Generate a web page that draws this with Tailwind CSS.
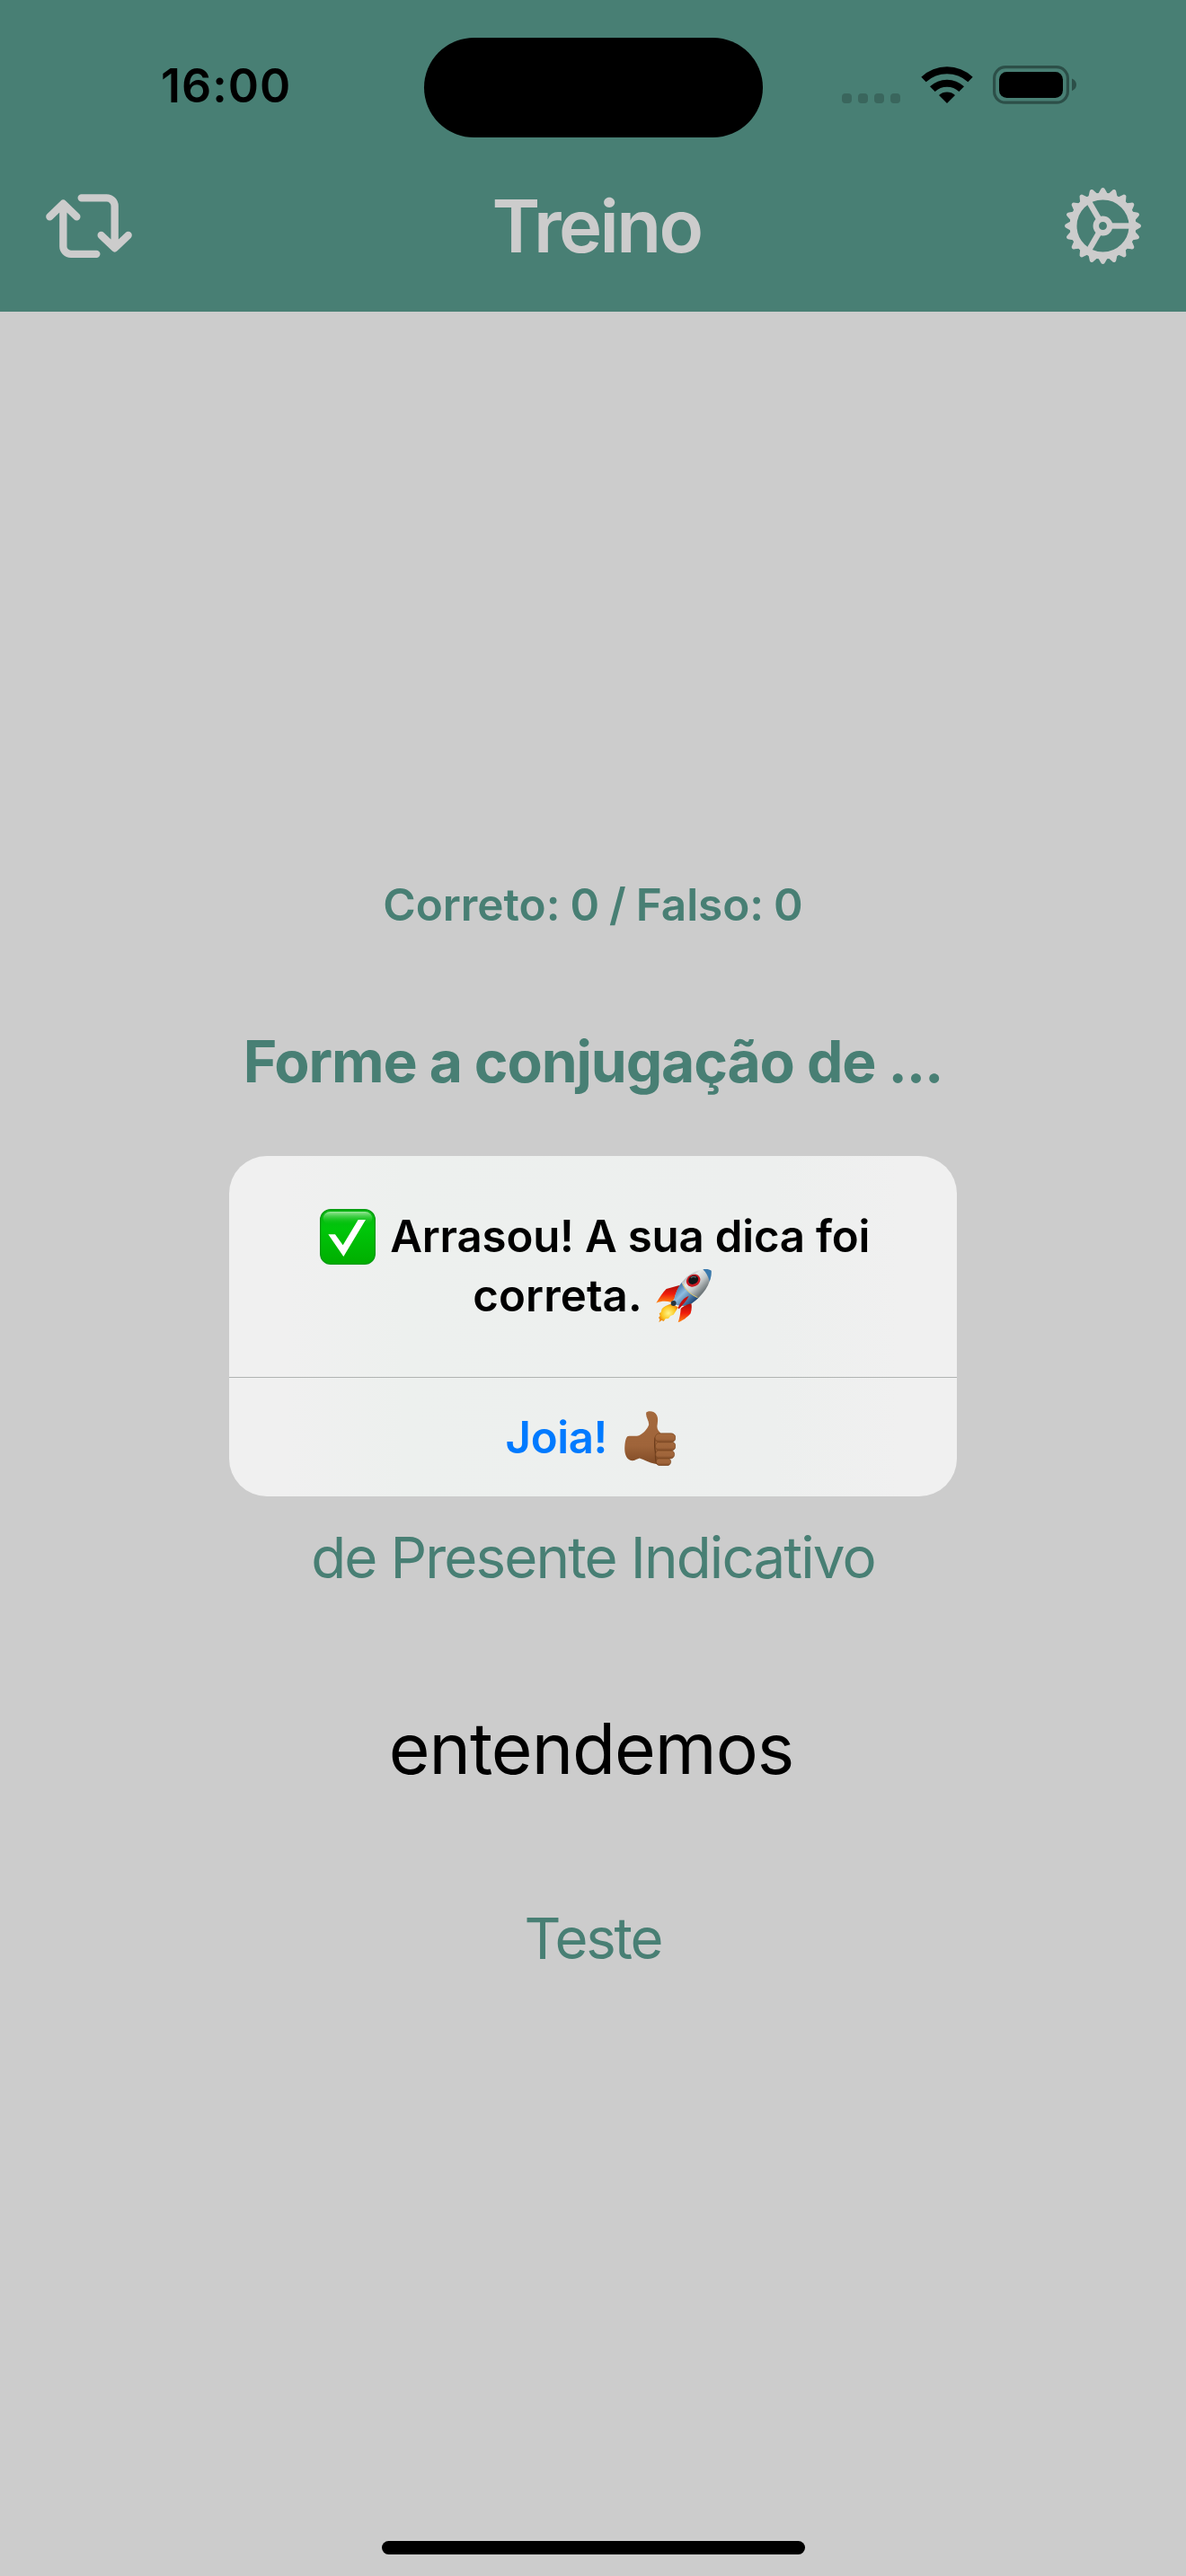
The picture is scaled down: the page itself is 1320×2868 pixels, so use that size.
<!DOCTYPE html>
<html lang="pt">
<head>
<meta charset="utf-8">
<meta name="viewport" content="width=device-width">
<title>Treino</title>
<script src="https://cdn.jsdelivr.net/npm/@tailwindcss/browser@4"></script>
</head>
<body class="relative flex h-[2868px] w-[1320px] flex-col overflow-hidden bg-[#cccccc] font-['Inter',sans-serif] text-[#487f74]">

<header class="h-[347px] shrink-0 bg-[#487f74]">
  <!-- status bar -->
  <div class="flex h-[156px] items-start text-black">
    <div class="ml-[179px] mt-[46px] h-[100px] w-[292.5px] text-[52px] leading-[100px] font-semibold tracking-[0.97px]">16:00</div>
    <div class="mt-[41.5px] h-[111px] w-[377px] rounded-full bg-black"></div>
    <div class="ml-[88.5px] mt-[104px] flex gap-[7px]">
      <span class="size-[11px] rounded-[4px] bg-[#3a665d]"></span>
      <span class="size-[11px] rounded-[4px] bg-[#3a665d]"></span>
      <span class="size-[11px] rounded-[4px] bg-[#3a665d]"></span>
      <span class="size-[11px] rounded-[4px] bg-[#3a665d]"></span>
    </div>
    <svg class="ml-[22.500px] mt-[73px] h-[42px] w-[58px]" viewBox="0 0 174 126">
      <path d="M1 38 A126 126 0 0 1 173 38 L157 55 A103 103 0 0 0 17 55 Z"/>
      <path d="M30 70 A82 82 0 0 1 144 70 L127 87 A59 59 0 0 0 47 87 Z"/>
      <path d="M60 99 A40 40 0 0 1 114 99 L87 126 Z"/>
    </svg>
    <svg class="ml-[22.500px] mt-[73px] h-[43px] w-[94px]" viewBox="0 0 94 43">
      <rect x="1.6" y="1.6" width="81.800" height="39.6" rx="12.5" fill="none" stroke="#2c4f48" stroke-width="3.2"/>
      <rect x="7" y="7" width="71" height="29" rx="8.5"/>
      <path d="M88 14.5 C91.500 16 93 18.500 93 21.300 C93 24.200 91.500 26.700 88 28.200 Z" fill="#2c4f48"/>
    </svg>
  </div>
  <!-- navigation bar -->
  <div class="flex h-[191px] items-center text-[#cccccc]">
    <svg class="ml-[50px] h-[74px] w-[98px] shrink-0" viewBox="60 75 294 222" fill="none" stroke="currentColor" stroke-width="25" stroke-linecap="round" stroke-linejoin="round">
      <path d="M76 154 L121 110 L166 154 M121 114 V251 A26 26 0 0 0 147 278.500 H232"/>
      <path d="M182 91 H266 A27 27 0 0 1 293 118 V255 M248 216 L293 259 L338 216"/>
    </svg>
    <h1 class="flex-1 pr-[5px] text-center text-[81.5px] leading-[100px] font-semibold tracking-[-2.63px]">Treino</h1>
    <svg class="mr-[50px] size-[85px] shrink-0" viewBox="-42.500 -42.500 85 85">
      <g id="teeth" fill="currentColor"></g>
      <circle r="33" fill="none" stroke="currentColor" stroke-width="8"/>
      <circle r="7.700" fill="none" stroke="currentColor" stroke-width="6.500"/>
      <g stroke="currentColor" stroke-width="6.400">
        <path d="M9 0 H31"/>
        <path d="M9 0 H31" transform="rotate(120)"/>
        <path d="M9 0 H31" transform="rotate(240)"/>
      </g>
    </svg>
  </div>
</header>

<main class="flex flex-1 flex-col items-center pt-[610px] leading-[100px] whitespace-nowrap">
  <p class="text-[49.5px] font-semibold tracking-[-0.05px] [word-spacing:-1.400px]">Correto: 0 / Falso: 0</p>
  <h2 class="mt-[74.500px] text-[64.2px] font-bold tracking-[-1.13px]">Forme a conjugação de ...</h2>
  <p class="mt-[452px] text-[63.7px] tracking-[-1.9px]">de Presente Indicativo</p>
  <p class="mt-[113px] pr-[4px] text-[78.6px] tracking-[-1.05px] text-black">entendemos</p>
  <button class="mt-[111.500px] text-[63.5px] tracking-[-2.18px]">Teste</button>
</main>

<!-- home indicator -->
<div class="mx-auto mb-[24px] h-[15px] w-[471px] shrink-0 rounded-full bg-black"></div>

<!-- alert -->
<div role="dialog" class="absolute left-[255px] top-[1287px] flex h-[379px] w-[810px] flex-col overflow-hidden rounded-[42px] bg-[linear-gradient(90deg,#f0f0f0_0%,#f0f0f0_8%,#edf0ee_24%,#edefee_75%,#f0f0f0_92%,#f0f0f0_100%)] text-[49.2px] font-semibold whitespace-nowrap text-black">
  <div class="h-[246px] pt-[57px]">
    <div class="flex h-[66px] items-center justify-center pl-[4px]">
      <svg class="mr-[16.500px] size-[62px] shrink-0" viewBox="0 0 186 186">
        <defs>
          <linearGradient id="ck" x2="0" y2="1"><stop offset="0" stop-color="#0ab413"/><stop offset=".35" stop-color="#00c60a"/><stop offset="1" stop-color="#00ae00"/></linearGradient>
          <linearGradient id="gl" x2="0" y2="1"><stop offset="0" stop-color="#9be79b"/><stop offset="1" stop-color="#00c60a" stop-opacity="0"/></linearGradient>
        </defs>
        <rect x="2" y="2" width="182" height="182" rx="34" fill="url(#ck)" stroke="#079b11" stroke-width="4"/>
        <rect x="11" y="9" width="164" height="44" rx="24" fill="url(#gl)"/>
        <path d="M28 85 H51 L77 121 L128 36 H153 L79 159 Z" fill="#fff"/>
      </svg>
      <span class="tracking-[-0.19px]">Arrasou! A sua dica foi</span>
    </div>
    <div class="flex h-[66px] items-center justify-center pr-[2px]">
      <span class="tracking-[0.09px]">correta.</span>
      <svg class="ml-[15px] h-[60px] w-[62px] shrink-0" viewBox="56 72 186 180">
        <defs>
          <linearGradient id="rb" gradientUnits="userSpaceOnUse" x1="145" y1="95" x2="205" y2="155"><stop offset="0" stop-color="#8f999c"/><stop offset=".35" stop-color="#e6e9e8"/><stop offset=".65" stop-color="#c4c9ca"/><stop offset="1" stop-color="#6f787b"/></linearGradient>
          <linearGradient id="rl" gradientUnits="userSpaceOnUse" x1="115" y1="140" x2="170" y2="195"><stop offset="0" stop-color="#3a6da3"/><stop offset=".4" stop-color="#8fbde0"/><stop offset="1" stop-color="#1d4677"/></linearGradient>
          <linearGradient id="rf" x2="0" y2="1"><stop offset="0" stop-color="#a80d08"/><stop offset=".5" stop-color="#f01c0c"/><stop offset="1" stop-color="#ff8a12"/></linearGradient>
          <radialGradient id="fl"><stop offset="0" stop-color="#fff58a"/><stop offset=".7" stop-color="#fbc61f"/><stop offset="1" stop-color="#ee8b10"/></radialGradient>
        </defs>
        <path d="M106 188 C94 192 82 196 76 205 L73 216 L67 220 L70 228 L65 234 L69 240 L66 250 L75 243 L82 246 L88 238 L98 237 L105 228 L115 224 L131 199 Z" fill="url(#fl)"/>
        <path d="M137 125 L91 138 C79 150 67 168 57 185 C74 178 90 178 106 182 L121 170 Z" fill="url(#rf)"/>
        <path d="M241 77 C218 66 180 78 153 104 C132 126 119 156 115 184 C127 198 152 197 175 187 C212 161 242 121 241 77 Z" fill="url(#rb)"/>
        <path d="M142 117 C125 139 118 163 115 184 C127 198 152 197 175 187 L197 169 C174 160 153 142 142 117 Z" fill="url(#rl)"/>
        <path d="M145 121 Q160 151 195 167" fill="none" stroke="#d8c46b" stroke-width="3"/>
        <path d="M213 73 C225 71 235 73 241 77 C242 91 239 103 235 113 C231 96 224 84 213 73 Z" fill="#3979ad"/>
        <path d="M166 161 C150 167 138 181 131 199 C129 205 132 207 136 202 C145 191 158 179 166 161 Z" fill="#c40e0c"/>
        <path d="M174 187 C161 190 147 195 139 204 C138 220 135 236 130 250 C149 241 164 231 172 220 C175 209 177 197 174 187 Z" fill="url(#rf)"/>
        <circle cx="115" cy="186" r="9" fill="#273640"/>
        <ellipse cx="181" cy="110" rx="24" ry="20" transform="rotate(-28 181 110)" fill="#c81820"/>
        <ellipse cx="181" cy="108" rx="17" ry="14" transform="rotate(-28 181 108)" fill="#111517"/>
        <path d="M173 101 Q181 94 190 100" fill="none" stroke="#596166" stroke-width="4"/>
      </svg>
    </div>
  </div>
  <button class="flex h-[133px] items-center justify-center border-t border-[#b0b4b2] pt-[2px] pr-[5px] text-[#007aff]">
    <span class="tracking-[-0.42px]">Joia!</span>
    <svg class="ml-[19px] h-[61px] w-[57.500px] shrink-0" viewBox="43 47 172 184">
      <defs>
        <linearGradient id="hd" x2="0" y2="1"><stop offset="0" stop-color="#a4693d"/><stop offset=".65" stop-color="#9f643a"/><stop offset="1" stop-color="#7f4a25"/></linearGradient>
      </defs>
      <path d="M116 51 C124 45 144 46 151 61 C157 73 153 86 152 98 C152 108 157 114 163 120 L170 226 C154 227 135 223 119 216 C109 212 101 207 93 205 C85 207 78 213 68 214 C50 211 43 194 43 174 C43 156 46 138 52 132 C63 128 78 133 91 129 C106 122 119 108 124 94 C126 78 111 66 116 51 Z" fill="url(#hd)"/>
      <path d="M153 226 C143 214 148 200 146 184 C142 165 144 147 145 136" fill="none" stroke="#6d3d1c" stroke-width="4"/>
      <g fill="url(#hd)" stroke="#78441f" stroke-width="2">
        <rect x="149" y="205" width="49" height="25" rx="12.500"/>
        <rect x="147" y="178" width="63" height="29" rx="14"/>
        <rect x="146" y="150" width="68" height="30" rx="15"/>
        <rect x="145" y="122" width="69" height="30" rx="15"/>
      </g>
    </svg>
  </button>
</div>

<script>
  // Twenty teeth around the settings gear.
  const teeth = document.getElementById('teeth');
  for (let i = 0; i < 20; i++) {
    const tooth = document.createElementNS('http://www.w3.org/2000/svg', 'path');
    tooth.setAttribute('d', 'M34 -5.800 L36.500 -4.800 L40.500 -2.500 Q42.500 -1.800 42.500 0 Q42.500 1.800 40.500 2.500 L36.500 4.800 L34 5.800 Z');
    tooth.setAttribute('transform', `rotate(${i * 18})`);
    teeth.appendChild(tooth);
  }
</script>
</body>
</html>
